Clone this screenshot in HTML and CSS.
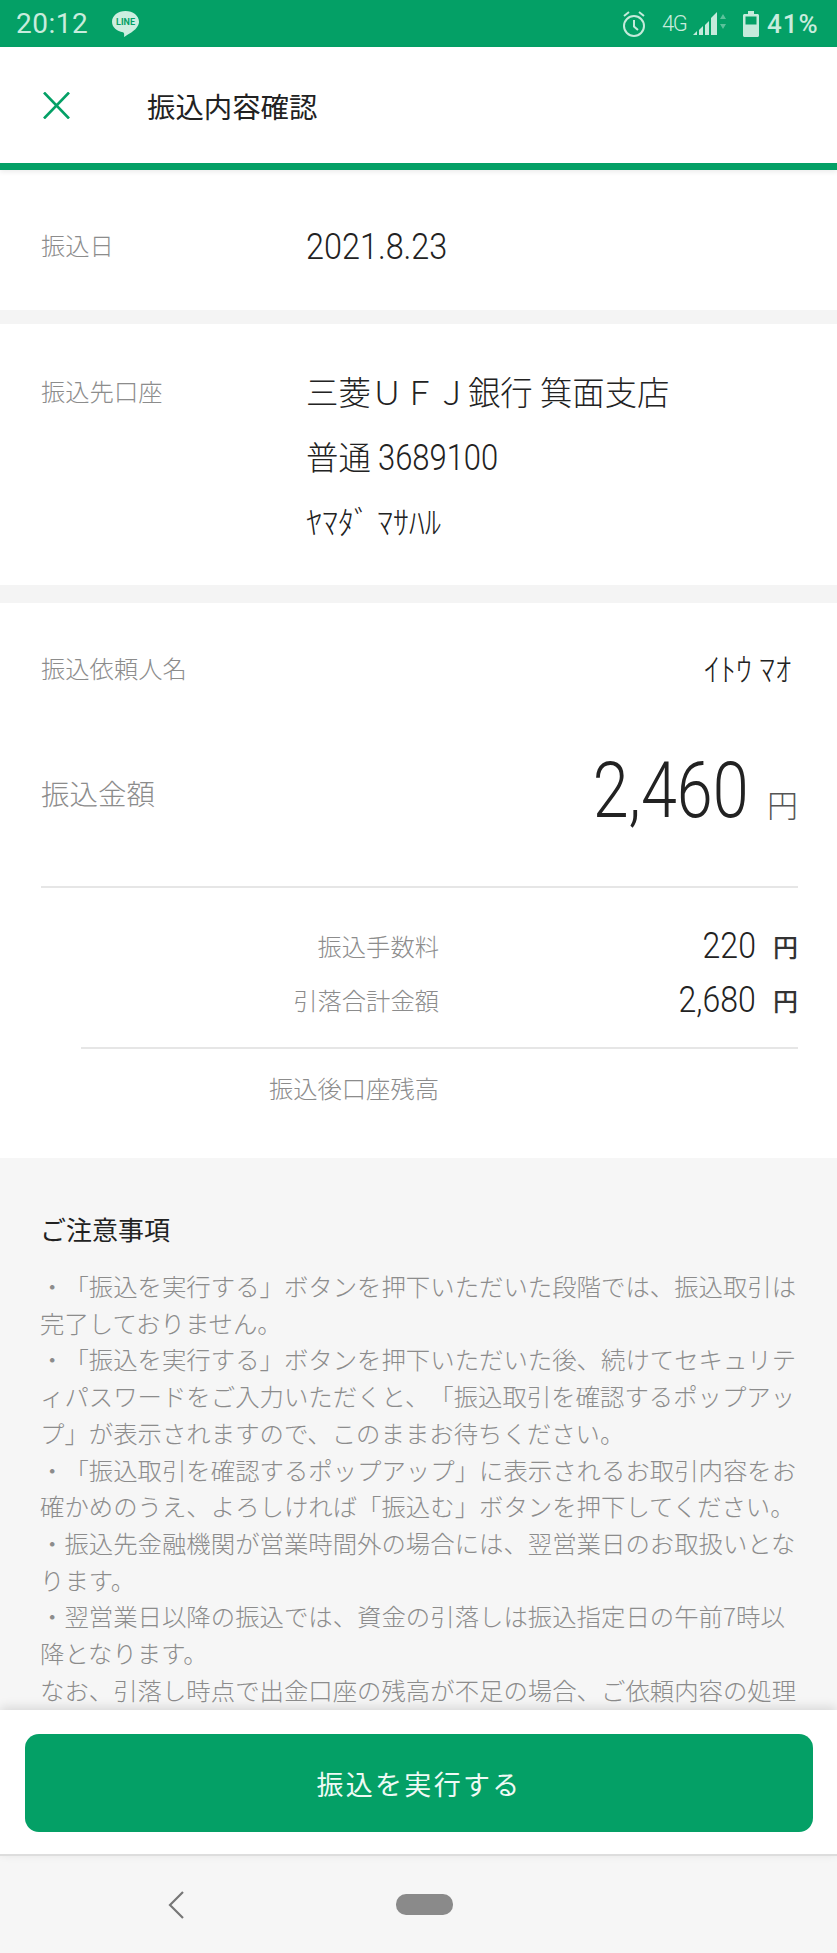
FILE: index.html
```html
<!DOCTYPE html>
<html lang="ja">
<head>
    <meta charset="UTF-8">
    <meta name="viewport" content="width=device-width, initial-scale=1.0">
    <title>振込内容確認</title>
    <link rel="stylesheet" href="styles.css">
</head>
<body>
    <div class="status">
        <span class="time">20:12</span>
        <svg class="line-icon" width="27" height="26" viewBox="0 0 27 26">
            <path d="M13.5 0C6 0 0 4.700 0 10.800C0 16.500 5 20.400 11 21.300C12 21.500 12.500 23 12 26C15 24 24 19.500 26 14.500C26.700 13 27 12 27 10.800C27 4.700 21 0 13.500 0Z" fill="#cdeee0"/>
            <text x="13.500" y="14" text-anchor="middle" class="line-word">LINE</text>
        </svg>
        <div class="status-right">
            <svg class="alarm" width="22" height="26" viewBox="0 0 22 26" fill="none" stroke="#c5eadb" stroke-width="2">
                <circle cx="11" cy="15" r="10"/>
                <path d="M11 9V15.500L15 19M1 5L6 1M21 5L16 1"/>
            </svg>
            <span class="net">4G</span>
            <svg class="signal" width="34" height="26" viewBox="0 0 34 26" fill="#c5eadb">
                <path d="M0 24H4V20Z"/>
                <path d="M6 24H10V15L6 19Z"/>
                <path d="M12 24H16V10L12 14Z"/>
                <path d="M18 24H24V1L18 7Z"/>
                <path d="M27 8L30 3L33 8ZM27 13L33 13L30 18Z" opacity=".45"/>
            </svg>
            <svg class="battery" width="16" height="26" viewBox="0 0 16 26" fill="none">
                <path d="M5 0H11V3H14.500C15.300 3 16 3.700 16 4.500V24.500C16 25.300 15.300 26 14.500 26H1.500C0.700 26 0 25.300 0 24.500V4.500C0 3.700 0.700 3 1.500 3H5Z" fill="#c5eadb"/>
                <rect x="2.500" y="5.500" width="11" height="8" fill="#04a066"/>
            </svg>
            <span class="percent">41%</span>
        </div>
    </div>

    <header>
        <svg class="close" width="27" height="27" viewBox="0 0 27 27" fill="none" stroke="#04a066" stroke-width="2.600">
            <path d="M1 0.500L26 26.500M26 0.500L1 26.500"/>
        </svg>
        <h1>振込内容確認</h1>
    </header>

    <main>
        <section class="block date-block">
            <div class="label date-label">振込日</div>
            <div class="value"><span class="num">2021.8.23</span></div>
        </section>

        <section class="block dest-block">
            <div class="label">振込先口座</div>
            <div class="value">三菱ＵＦＪ銀行 箕面支店</div>
            <div></div>
            <div class="value">普通 <span class="num">3689100</span></div>
            <div></div>
            <div class="value kana">ﾔﾏﾀﾞ ﾏｻﾊﾙ</div>
        </section>

        <section class="block money-block">
            <div class="row sender">
                <div class="label">振込依頼人名</div>
                <div class="kana sender-name">ｲﾄｳ ﾏｵ</div>
            </div>
            <div class="row amount">
                <div class="label amount-label">振込金額</div>
                <div class="amount-value"><span class="num num-right big">2,460</span><span class="yen-big">円</span></div>
            </div>
            <div class="fees">
                <div class="row fee">
                    <div class="label fee-label">振込手数料</div>
                    <div class="fee-value"><span class="num num-right">220</span><span class="yen">円</span></div>
                </div>
                <div class="row fee">
                    <div class="label fee-label">引落合計金額</div>
                    <div class="fee-value"><span class="num num-right">2,680</span><span class="yen">円</span></div>
                </div>
            </div>
            <div class="row balance">
                <div class="label fee-label">振込後口座残高</div>
            </div>
        </section>

        <section class="notes">
            <h2>ご注意事項</h2>
            <p>・「振込を実行する」ボタンを押下いただいた段階では、振込取引は完了しておりません。</p>
            <p>・「振込を実行する」ボタンを押下いただいた後、続けてセキュリティパスワードをご入力いただくと、「振込取引を確認するポップアップ」が表示されますので、このままお待ちください。</p>
            <p>・「振込取引を確認するポップアップ」に表示されるお取引内容をお確かめのうえ、よろしければ「振込む」ボタンを押下してください。</p>
            <p>・振込先金融機関が営業時間外の場合には、翌営業日のお取扱いとなります。</p>
            <p>・翌営業日以降の振込では、資金の引落しは振込指定日の午前7時以降となります。</p>
            <p>なお、引落し時点で出金口座の残高が不足の場合、ご依頼内容の処理</p>
        </section>
    </main>

    <footer>
        <button>振込を実行する</button>
    </footer>

    <nav>
        <svg class="back" width="16" height="28" viewBox="0 0 16 28" fill="none" stroke="#777" stroke-width="2.200">
            <path d="M15 1L2 14L15 27"/>
        </svg>
        <div class="home"></div>
    </nav>
</body>
</html>
```

FILE: styles.css
```css
* {
    margin: 0;
    padding: 0;
    box-sizing: border-box;
}

html, body {
    height: 100%;
}

body {
    display: flex;
    flex-direction: column;
    overflow: hidden;
    background-color: #f4f4f4;
    font-family: "Noto Sans CJK JP", sans-serif;
    font-weight: 300;
    color: #222;
    text-spacing-trim: space-all;
}

/* status bar */
.status {
    display: flex;
    align-items: center;
    height: 47px;
    padding: 0 18px 0 16px;
    background-color: #04a066;
    color: #c8ecdd;
    font-family: Roboto, sans-serif;
    flex-shrink: 0;
}
.time {
    font-size: 28px;
    font-weight: 400;
    width: 72px;
    margin-right: 24px;
    letter-spacing: 0.5px;
}
.line-word {
    font-family: Roboto, sans-serif;
    font-size: 9px;
    font-weight: 700;
    fill: #04a066;
}
.status-right {
    display: flex;
    align-items: center;
    margin-left: auto;
}
.net {
    width: 26px;
    margin: 0 5px 0 17px;
    font-size: 22px;
    font-weight: 300;
    letter-spacing: -1.5px;
}
.battery {
    margin: 0 8px 0 16px;
}
.percent {
    width: 52px;
    font-size: 26px;
    font-weight: 500;
    letter-spacing: 1px;
}

/* title bar */
header {
    position: relative;
    z-index: 1;
    display: flex;
    align-items: center;
    height: 123px;
    padding: 0 0 0 43px;
    background-color: #fff;
    border-bottom: 7px solid #04a066;
    box-shadow: 0 2px 5px rgba(0, 0, 0, 0.08);
    flex-shrink: 0;
}
h1 {
    margin-left: 77px;
    font-size: 28.4px;
    font-weight: 400;
    color: #222;
}

main {
    flex: 1;
    min-height: 0;
    overflow: hidden;
}

.block {
    background-color: #fff;
    padding: 0 39px 0 41px;
}
.label {
    font-size: 24.3px;
    color: #8c8c8c;
}
.value {
    font-size: 32.4px;
    line-height: 65px;
    color: #222;
}
.num {
    display: inline-block;
    font-family: Roboto, sans-serif;
    font-weight: 300;
    font-size: 36px;
    line-height: 1;
    transform: scaleX(0.89);
    transform-origin: left center;
}
.num-right {
    transform-origin: right center;
}
.kana {
    font-size: 32px;
}

/* date */
.date-block {
    display: grid;
    grid-template-columns: 265px 1fr;
    align-items: center;
    height: 140px;
    padding-top: 8px;
    margin-bottom: 14px;
}
.date-block .num {
    transform: scaleX(0.9);
}
.date-label {
    line-height: 65px;
}

/* destination */
.dest-block {
    display: grid;
    grid-template-columns: 265px 1fr;
    align-content: start;
    height: 261px;
    padding-top: 34px;
    margin-bottom: 18px;
}
.dest-block .label {
    line-height: 65px;
}
.dest-block .num {
    transform: scaleX(0.86);
}

/* amounts */
.money-block {
    height: 555px;
    padding-top: 32px;
}
.row {
    display: flex;
    align-items: center;
    justify-content: space-between;
}
.sender {
    height: 64px;
}
.sender-name {
    padding-right: 7px;
}
.amount {
    height: 100px;
    margin-top: 42px;
    margin-bottom: 45px;
}
.amount-label {
    font-size: 28.5px;
    padding-top: 2px;
}
.amount-value {
    display: flex;
    align-items: baseline;
    color: #222;
}
.big {
    font-size: 77px;
    line-height: 100px;
    transform: scaleX(0.84);
}
.yen-big {
    margin-left: 18px;
    font-size: 31px;
    color: #555;
}
.fees {
    padding-top: 30px;
    border-top: 2px solid #e6e6e6;
}
.fee {
    height: 55px;
    margin-left: 40px;
}
.fee:last-child {
    height: 76px;
    padding-bottom: 21px;
    border-bottom: 2px solid #e6e6e6;
}
.fee-label {
    width: 358px;
    text-align: right;
}
.fee-value {
    display: flex;
    align-items: center;
    color: #222;
}
.yen {
    margin-left: 17px;
    font-size: 25px;
    font-weight: 500;
    color: #333;
}
.balance {
    height: 76px;
    margin-left: 40px;
}

/* notes */
.notes {
    height: 100%;
    padding: 53px 39px 0 40px;
    background-color: #f6f6f6;
}
h2 {
    font-size: 26px;
    font-weight: 400;
    line-height: 36px;
    margin-bottom: 21px;
    color: #222;
}
.notes p {
    font-size: 24.4px;
    line-height: 36.7px;
    color: #8c8c8c;
    line-break: anywhere;
}

/* fixed button */
footer {
    position: relative;
    z-index: 1;
    height: 146px;
    padding: 24px 24px 0 25px;
    background-color: #fff;
    border-bottom: 2px solid #ddd;
    box-shadow: 0 -3px 10px rgba(0, 0, 0, 0.12);
    flex-shrink: 0;
}
button {
    display: block;
    width: 100%;
    height: 98px;
    border: none;
    border-radius: 14px;
    background-color: #04a066;
    color: #effaf5;
    font-family: "Noto Sans CJK JP", sans-serif;
    font-size: 27px;
    font-weight: 400;
    letter-spacing: 2.3px;
}

/* android nav */
nav {
    display: flex;
    align-items: center;
    height: 97px;
    padding-left: 168px;
    background-color: #f6f6f6;
    flex-shrink: 0;
}
.home {
    width: 57px;
    height: 21px;
    margin-left: 212px;
    border-radius: 10px;
    background-color: #8a8a8a;
}
```
